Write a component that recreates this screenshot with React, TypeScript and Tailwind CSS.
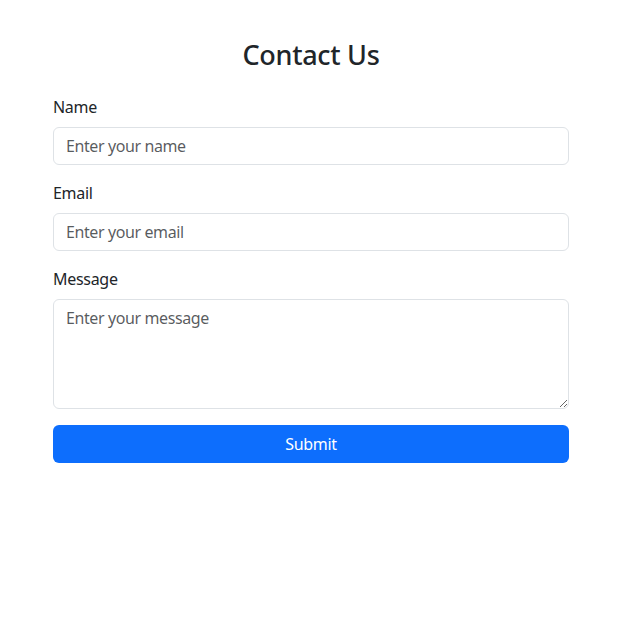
export default function App() {
  const font = { fontFamily: '"Noto Sans", "Open Sans", sans-serif' };
  return (
    <div className="w-[622px] bg-white text-[#212529] tracking-[-0.3px]" style={font}>
      <div className="mx-auto max-w-[540px] px-3 pt-[39px]">
        <h2 className="mb-6 text-center text-[27px] font-medium leading-[1.2]">Contact Us</h2>
        <form>
          <div className="mb-4">
            <label className="mb-2 block text-base leading-6">Name</label>
            <input
              type="text"
              placeholder="Enter your name"
              className="block h-[38px] w-full rounded-[6px] border border-[#dee2e6] px-3 py-1.5 text-base leading-6 tracking-[-0.4px] outline-none placeholder:text-[rgba(33,37,41,0.75)]"
            />
          </div>
          <div className="mb-4">
            <label className="mb-2 block text-base leading-6">Email</label>
            <input
              type="email"
              placeholder="Enter your email"
              className="block h-[38px] w-full rounded-[6px] border border-[#dee2e6] px-3 py-1.5 text-base leading-6 tracking-[-0.4px] outline-none placeholder:text-[rgba(33,37,41,0.75)]"
            />
          </div>
          <div className="mb-4">
            <label className="mb-2 block text-base leading-6">Message</label>
            <textarea
              rows={4}
              placeholder="Enter your message"
              className="block h-[110px] w-full resize-y rounded-[6px] border border-[#dee2e6] px-3 py-1.5 text-base leading-6 tracking-[-0.4px] outline-none placeholder:text-[rgba(33,37,41,0.75)]"
            />
          </div>
          <button
            type="button"
            className="block h-[38px] w-full rounded-[6px] bg-[#0d6efd] text-base leading-6 text-white"
          >
            Submit
          </button>
        </form>
      </div>
    </div>
  );
}
